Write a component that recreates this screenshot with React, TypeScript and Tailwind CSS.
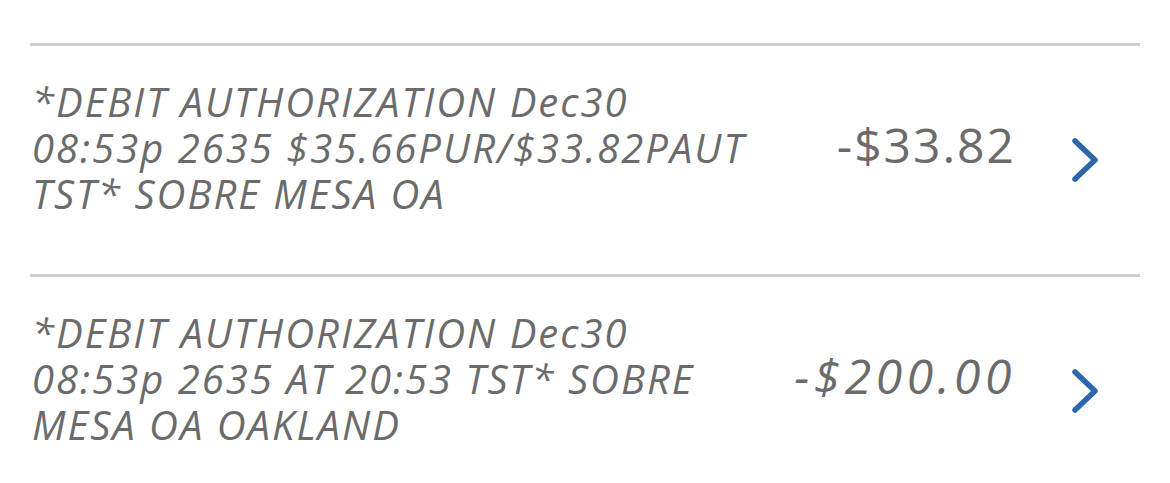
import React from "react";

const rows = [
  {
    lines: ["*DEBIT AUTHORIZATION Dec30", "08:53p 2635 $35.66PUR/$33.82PAUT", "TST* SOBRE MESA OA"],
    amount: "-$33.82",
    italicAmount: false,
  },
  {
    lines: ["*DEBIT AUTHORIZATION Dec30", "08:53p 2635 AT 20:53 TST* SOBRE", "MESA OA OAKLAND"],
    amount: "-$200.00",
    italicAmount: true,
  },
];

function Chevron() {
  return (
    <svg width="28" height="46" viewBox="0 0 28 46" className="mt-[58px]">
      <path d="M4 4 L24 23 L4 42" fill="none" stroke="#2b67a9" strokeWidth="5.5" strokeLinecap="round" strokeLinejoin="round" />
    </svg>
  );
}

export default function App() {
  return (
    <div className="w-[1170px] h-[483px] bg-white overflow-hidden pt-[43px] pl-[30px] pr-[30px]" style={{ fontFamily: "'Open Sans', 'Noto Sans', sans-serif" }}>
      {rows.map((r, i) => (
        <div key={i} className="border-t-[3px] border-[#cfcfcf] flex items-start pt-[33px] pb-[57px]">
          <div className="flex-1 pl-[2px] text-[#6b6b6b] italic text-[40px] leading-[46px] tracking-[2px]">
            {r.lines.map((l, j) => (
              <div key={j} className="whitespace-nowrap">{l}</div>
            ))}
          </div>
          <div className={`text-[#6b6b6b] text-[48px] leading-[46px] mt-[43px] ${r.italicAmount ? "italic tracking-[4.5px]" : "tracking-[2px]"}`}>{r.amount}</div>
          <div className="w-[124px] flex justify-start pl-[55px]">
            <Chevron />
          </div>
        </div>
      ))}
    </div>
  );
}
